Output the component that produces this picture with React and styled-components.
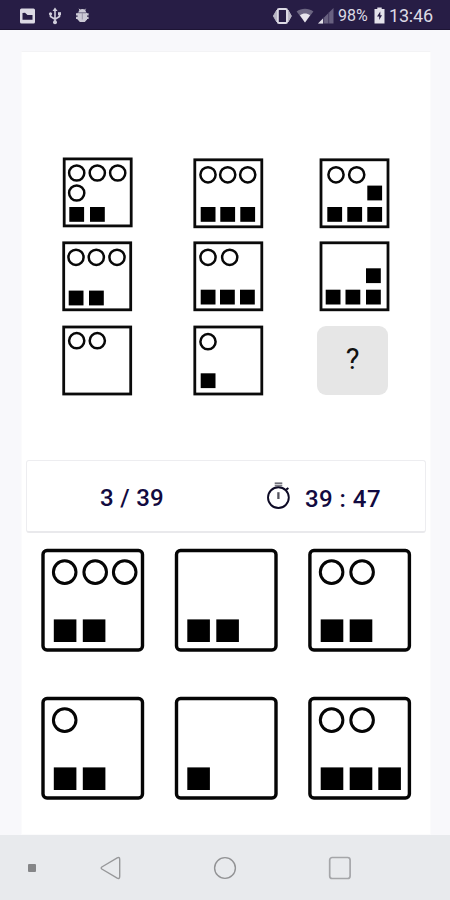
import React from 'react';
import { styled, createGlobalStyle } from 'styled-components';

const GlobalStyle = createGlobalStyle`
  * {
    box-sizing: border-box;
  }

  body {
    margin: 0;
    font-family: Roboto, "Liberation Sans", sans-serif;
    background: #f8f8fb;
  }
`;

const Screen = styled.div`
  width: 450px;
  height: 900px;
  display: flex;
  flex-direction: column;
  overflow: hidden;
  background: #f8f8fb;
`;

const StatusBar = styled.header`
  height: 30px;
  flex: none;
  display: flex;
  align-items: center;
  justify-content: space-between;
  padding: 2px 18px 0 19px;
  background: #271d45;
  border-bottom: 1px solid #1d1434;
  color: #dcdae4;
`;

const StatusGroup = styled.div`
  display: flex;
  align-items: center;
  gap: ${(props) => props.$gap || '0'};

  svg {
    display: block;
    flex: none;
  }
`;

const StatusText = styled.span`
  width: ${(props) => props.$width};
  font-size: ${(props) => props.$size};
  letter-spacing: ${(props) => props.$spacing || '0'};
  line-height: 20px;
  white-space: nowrap;
`;

const Content = styled.main`
  flex: none;
  width: 410px;
  height: 784px;
  margin: 21px 0 0 21px;
  background: #ffffff;
  border: 1px solid #fbfbfc;
  border-top-color: #f3f3f5;
`;

const Matrix = styled.section`
  height: 408px;
  padding: 105px 0 0 40px;
  display: grid;
  grid-template-columns: 131px 126px 72px;
  grid-template-rows: 84px 84px 72px;

  svg {
    display: block;
  }
`;

const Missing = styled.div`
  width: 71px;
  height: 69px;
  margin: 1px 0 0 -2px;
  padding-bottom: 2px;
  display: flex;
  align-items: center;
  justify-content: center;
  border-radius: 9px;
  background: #e6e6e6;
  color: #111111;
  font-size: 29px;
  line-height: 1;
`;

const Progress = styled.section`
  width: 400px;
  height: 73px;
  margin-left: 4px;
  display: flex;
  align-items: center;
  border: 1px solid #ededf0;
  border-bottom: 2px solid #e9e9ec;
  border-radius: 3px;
  color: #120a40;
`;

const Counter = styled.div`
  width: 166px;
  padding: 3px 0 0 73px;
  font-size: 24px;
  font-weight: 500;
  letter-spacing: 0.3px;
  line-height: 28px;
  white-space: nowrap;
`;

const Timer = styled.div`
  display: flex;
  align-items: center;
  margin-left: 73px;

  svg {
    display: block;
  }
`;

const TimerText = styled.span`
  padding: 6px 0 0 14px;
  font-size: 24px;
  font-weight: 500;
  letter-spacing: 0.45px;
  line-height: 28px;
  white-space: nowrap;
`;

const Options = styled.section`
  padding: 15px 0 0 19px;
  display: grid;
  grid-template-columns: 133px 134px 104px;
  grid-template-rows: 148px 104px;
`;

const OptionButton = styled.button`
  width: 104px;
  height: 104px;
  padding: 0;
  border: none;
  background: none;
  cursor: pointer;

  svg {
    display: block;
  }
`;

const NavBar = styled.nav`
  flex: 1;
  display: flex;
  align-items: center;
  padding: 1px 0 0 28px;
  background: #e8eaed;
`;

const NavDot = styled.span`
  width: 8px;
  height: 8px;
  border-radius: 1px;
  background: #858688;
`;

const NavItem = styled.span`
  display: flex;
  margin-left: ${(props) => props.$left};
`;

// circles are [cx, cy], squares are [x, y]
const puzzle = [
  {
    frame: [0.8, 0.5],
    circles: [[14.7, 16], [35.3, 16], [55.7, 16], [14.7, 36]],
    squares: [[7.3, 50], [28, 50]],
  },
  {
    frame: [0.4, 1.4],
    circles: [[15, 17.8], [34.7, 17.8], [54.7, 17.8]],
    squares: [[7.7, 50], [27.3, 50], [47.3, 50]],
  },
  {
    frame: [0.6, 1.4],
    circles: [[17, 17.8], [37.7, 17.8]],
    squares: [[48.3, 28.6], [8.3, 50], [28.3, 50], [48.3, 50]],
  },
  {
    frame: [0.3, 0.4],
    circles: [[14, 16.3], [34.3, 16.3], [55, 16.3]],
    squares: [[6.7, 49.6], [27, 49.6]],
  },
  {
    frame: [0.4, 0.4],
    circles: [[15, 16.3], [36.7, 16.3]],
    squares: [[7.7, 48.7], [27, 48.7], [47, 48.7]],
  },
  {
    frame: [0.6, 0.4],
    circles: [],
    squares: [[47, 27.3], [6.7, 48.7], [26.5, 48.7], [47, 48.7]],
  },
  {
    frame: [0.3, 0.6],
    circles: [[14.7, 15.7], [35.3, 15.7]],
    squares: [],
  },
  {
    frame: [0.4, 0.6],
    circles: [[15, 16.7]],
    squares: [[7.7, 48.3]],
  },
];

const options = [
  { circles: 3, squares: 2, shift: 0.4 },
  { circles: 0, squares: 2, shift: 0.9 },
  { circles: 2, squares: 2, shift: 0.3 },
  { circles: 1, squares: 2, shift: 0.4 },
  { circles: 0, squares: 1, shift: 0.9 },
  { circles: 2, squares: 3, shift: 0.3 },
];

const circleX = [23.3, 53.8, 83.3];
const squareX = [12.4, 41.4, 70];

const MatrixTile = ({ frame, circles, squares }) => (
  <svg width="72" height="72" viewBox="0 0 72 72" fill="none">
    <rect x={frame[0] + 1.4} y={frame[1] + 1.4} width="67" height="67" stroke="#0a0a0a" strokeWidth="2.8" />
    {circles.map(([x, y]) => (
      <circle key={`${x}-${y}`} cx={x} cy={y} r="7.6" stroke="#080808" strokeWidth="2.5" />
    ))}
    {squares.map(([x, y]) => (
      <rect key={`${x}-${y}`} x={x} y={y} width="14.8" height="14.8" fill="#000" />
    ))}
  </svg>
);

const OptionTile = ({ circles, squares, shift }) => (
  <OptionButton>
    <svg width="104" height="104" viewBox="0 0 104 104" fill="none">
      <rect x={shift + 1.6} y="2.5" width="99.5" height="99.5" rx="4" stroke="#050505" strokeWidth="3.4" />
      {circleX.slice(0, circles).map((x) => (
        <circle key={x} cx={x + shift} cy="24.1" r="11.3" stroke="#050505" strokeWidth="3" />
      ))}
      {squareX.slice(0, squares).map((x) => (
        <rect key={x} x={x + shift} y="71.4" width="22.6" height="22.6" fill="#000" />
      ))}
    </svg>
  </OptionButton>
);

const PictureIcon = () => (
  <svg width="17" height="16" viewBox="0 0 17 16">
    <rect x="1" y="0.5" width="15" height="15" rx="1.5" fill="#dcdae4" />
    <path d="M3.5 11.8V5L6 4.8L8.5 7H13.5V11.8Z" fill="#271d45" />
  </svg>
);

const UsbIcon = () => (
  <svg width="14" height="18" viewBox="0 0 14 18" fill="none" stroke="#d0cedb" strokeWidth="1.6">
    <path d="M7 2.5V14.5M2.5 7V9.5L7 12.2L11.5 9.5V7" />
    <path d="M4.5 4L7 0.6L9.5 4Z" fill="#d0cedb" stroke="none" />
    <circle cx="7" cy="15.2" r="2" fill="#d0cedb" stroke="none" />
    <circle cx="2.5" cy="6.8" r="1.6" fill="#d0cedb" stroke="none" />
    <rect x="10" y="5.2" width="3" height="3" fill="#d0cedb" stroke="none" />
  </svg>
);

const DebugIcon = () => (
  <svg width="16" height="15" viewBox="0 0 16 15" fill="#cbc9d5">
    <path d="M4.5 4.6C4.5 2.3 6 1 8.3 1S12.1 2.3 12.1 4.6Z" />
    <path d="M3.6 4.8H13V11.5L10.8 14H5.8L3.6 11.5Z" />
    <path d="M2 6.4H14.6M2 9.8H14.6" stroke="#cbc9d5" strokeWidth="2.2" />
    <path d="M5 0.8L6.4 2.6M11.6 0.8L10.2 2.6" stroke="#cbc9d5" />
    <path d="M4.6 5H12M8.3 5.2V11.5" stroke="#847e95" strokeWidth="0.7" />
  </svg>
);

const VibrateIcon = () => (
  <svg width="20" height="16" viewBox="0 0 20 16">
    <path d="M1.4 8L4.8 2V14ZM19.4 8L16 2V14Z" fill="#b9b6c5" stroke="#b9b6c5" strokeLinejoin="round" />
    <rect x="5.8" y="1" width="9.2" height="14" rx="1.3" fill="#271d45" stroke="#dcdae4" strokeWidth="2" />
  </svg>
);

const WifiIcon = () => (
  <svg width="18" height="15" viewBox="0 0 18 15">
    <path d="M0.6 3.5C5.5 -0.3 12.5 -0.3 17.4 3.5L9 14.5Z" fill="#6c6682" />
    <path d="M3.9 7.2C7 4.9 11 4.9 14.1 7.2L9 14.5Z" fill="#e7e5ec" />
  </svg>
);

const SignalIcon = () => (
  <svg width="16" height="16" viewBox="0 0 16 16">
    <path d="M0 15.5L15.5 0V15.5Z" fill="#686180" />
    <path d="M0 15.5L5 10.5V15.5Z" fill="#e1dfe7" />
    <path d="M5.6 9V16M10.7 4V16" stroke="#3b3158" strokeWidth="0.8" />
  </svg>
);

const BatteryIcon = () => (
  <svg width="11" height="17" viewBox="0 0 11 17">
    <path d="M3.3 0.5H7.7V2H10.5V16.5H0.5V2H3.3Z" fill="#e4e2ea" />
    <path d="M6.3 4.5L3 9.5H5.2V13L8 8.2H6.3Z" fill="#271d45" />
  </svg>
);

const StopwatchIcon = () => (
  <svg width="25" height="30" viewBox="0 0 25 30" fill="none" stroke="#0d0a25">
    <path d="M8.7 2.3H16.3" stroke="#6e6e77" strokeWidth="1.8" />
    <path d="M8.7 4.6H16.3" stroke="#7c7c84" strokeWidth="1.5" />
    <circle cx="12.4" cy="16.6" r="10.4" strokeWidth="1.9" />
    <path d="M12.4 11.2V18" stroke="#55555f" strokeWidth="2.3" />
    <path d="M20.2 8.6L22.4 7" strokeWidth="2" />
  </svg>
);

const BackIcon = () => (
  <svg width="22" height="24" viewBox="0 0 22 24" fill="none">
    <path
      d="M1.8 11L17.2 1.9Q19.7 0.8 19.7 3.4V20.6Q19.7 23.2 17.2 22.1L1.8 13Q0.6 12 1.8 11Z"
      stroke="#97989a"
      strokeWidth="1.4"
    />
  </svg>
);

const HomeIcon = () => (
  <svg width="24" height="24" viewBox="0 0 24 24" fill="none">
    <circle cx="12" cy="12" r="10.4" stroke="#929395" strokeWidth="1.4" />
  </svg>
);

const RecentsIcon = () => (
  <svg width="24" height="24" viewBox="0 0 24 24" fill="none">
    <rect x="1.7" y="1.5" width="20.4" height="21" rx="2.5" stroke="#a5a6a9" strokeWidth="1.7" />
  </svg>
);

const App = () => {
  return (
    <>
      <GlobalStyle />
      <Screen>
        <StatusBar>
          <StatusGroup $gap='12px'>
            <PictureIcon />
            <UsbIcon />
            <DebugIcon />
          </StatusGroup>
          <StatusGroup $gap='4px'>
            <VibrateIcon />
            <WifiIcon />
            <SignalIcon />
            <StatusText $width='32px' $size='16px' $spacing='0'>98%</StatusText>
            <BatteryIcon />
            <StatusText $width='43px' $size='18px' $spacing='-0.2px'>13:46</StatusText>
          </StatusGroup>
        </StatusBar>

        <Content>
          <Matrix>
            {puzzle.map((tile, index) => (
              <MatrixTile key={index} {...tile} />
            ))}
            <Missing>?</Missing>
          </Matrix>

          <Progress>
            <Counter>3 / 39</Counter>
            <Timer>
              <StopwatchIcon />
              <TimerText>39 : 47</TimerText>
            </Timer>
          </Progress>

          <Options>
            {options.map((option, index) => (
              <OptionTile key={index} {...option} />
            ))}
          </Options>
        </Content>

        <NavBar>
          <NavDot />
          <NavItem $left='64px'>
            <BackIcon />
          </NavItem>
          <NavItem $left='91px'>
            <HomeIcon />
          </NavItem>
          <NavItem $left='91px'>
            <RecentsIcon />
          </NavItem>
        </NavBar>
      </Screen>
    </>
  );
};

export default App;
